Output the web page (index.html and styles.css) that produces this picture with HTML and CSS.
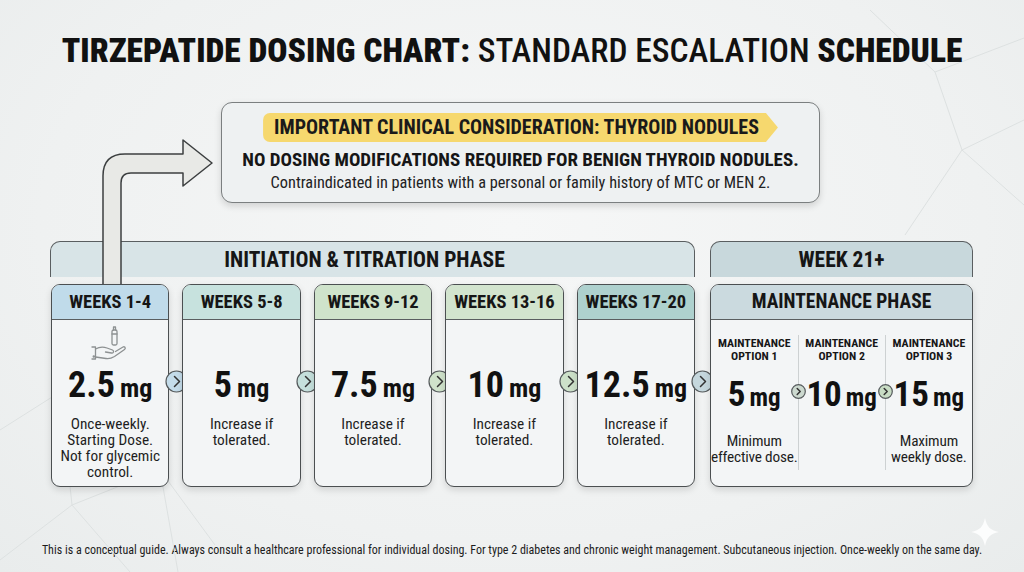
FILE: index.html
```html
<!DOCTYPE html>
<html lang="en">
<head>
<meta charset="utf-8">
<title>Tirzepatide Dosing Chart</title>
<link rel="stylesheet" href="styles.css">
</head>
<body>
<svg class="bg-lines" width="1024" height="572" viewBox="0 0 1024 572">
  <path d="M0 430 L60 392 L160 470 L178 572 M60 392 L72 505 L0 560 M72 505 L160 470 M72 505 L130 572 M160 470 L215 545" />
  <path d="M870 10 L935 72 L1024 38 M935 72 L962 150 L1024 205 M905 235 L962 150 M962 150 L1024 120" />
  <path class="sparkle" d="M985 518 C987 527 990 530 999 532 C990 534 987 537 985 546 C983 537 980 534 971 532 C980 530 983 527 985 518 Z" />
</svg>

<h1 class="title"><b>TIRZEPATIDE DOSING CHART:</b> <span class="light">STANDARD ESCALATION</span> <b>SCHEDULE</b></h1>

<section class="callout">
  <div class="banner">IMPORTANT CLINICAL CONSIDERATION: THYROID NODULES</div>
  <p class="callout-main">NO DOSING MODIFICATIONS REQUIRED FOR BENIGN THYROID NODULES.</p>
  <p class="callout-sub">Contraindicated in patients with a personal or family history of MTC or MEN 2.</p>
</section>

<svg class="bend-arrow" width="1024" height="572" viewBox="0 0 1024 572">
  <path d="M103 290 V176 Q103 154 125 154 H183 V140 L212 163 L183 186 V173 H131 Q121 173 121 183 V290" />
</svg>

<main class="phases">
  <section class="phase phase-init">
    <div class="phase-head">INITIATION &amp; TITRATION PHASE</div>
    <div class="cards">
      <article class="card c1">
        <div class="card-head">WEEKS 1-4</div>
        <div class="card-body">
          <div class="icon-slot">
            <svg class="hand-icon" width="40" height="40" viewBox="0 0 40 40">
              <rect x="22" y="6" width="5" height="15" rx="1.5" />
              <path d="M23.5 6 V3 H25.5 V6 M22 10 H27" />
              <path d="M2 23 H5.5 V35 H2" />
              <path d="M5.5 25 C9 23 13 22.5 17 24 L22.5 26 C24.5 27 23.5 29.5 21.5 29 L15.5 28" />
              <path d="M5.5 33 L16 34.5 C19 35 22 34 24.5 32.5 L34.5 25.5 C36 24.5 35 22 33 23 L25.5 27.5" />
              <circle cx="3.8" cy="32.5" r="0.6" />
            </svg>
          </div>
          <div class="dose">2.5<span>mg</span></div>
          <p class="desc">Once-weekly.<br>Starting Dose.<br>Not for glycemic<br>control.</p>
        </div>
        <span class="next n1"><svg width="23" height="23" viewBox="0 0 23 23"><circle cx="11.5" cy="11.5" r="10.5"/><path d="M9.5 6.5 L14.5 11.5 L9.5 16.5"/></svg></span>
      </article>
      <article class="card c2">
        <div class="card-head">WEEKS 5-8</div>
        <div class="card-body">
          <div class="icon-slot"></div>
          <div class="dose">5<span>mg</span></div>
          <p class="desc">Increase if<br>tolerated.</p>
        </div>
        <span class="next n2"><svg width="23" height="23" viewBox="0 0 23 23"><circle cx="11.5" cy="11.5" r="10.5"/><path d="M9.5 6.5 L14.5 11.5 L9.5 16.5"/></svg></span>
      </article>
      <article class="card c3">
        <div class="card-head">WEEKS 9-12</div>
        <div class="card-body">
          <div class="icon-slot"></div>
          <div class="dose">7.5<span>mg</span></div>
          <p class="desc">Increase if<br>tolerated.</p>
        </div>
        <span class="next n3"><svg width="23" height="23" viewBox="0 0 23 23"><circle cx="11.5" cy="11.5" r="10.5"/><path d="M9.5 6.5 L14.5 11.5 L9.5 16.5"/></svg></span>
      </article>
      <article class="card c4">
        <div class="card-head">WEEKS 13-16</div>
        <div class="card-body">
          <div class="icon-slot"></div>
          <div class="dose">10<span>mg</span></div>
          <p class="desc">Increase if<br>tolerated.</p>
        </div>
        <span class="next n4"><svg width="23" height="23" viewBox="0 0 23 23"><circle cx="11.5" cy="11.5" r="10.5"/><path d="M9.5 6.5 L14.5 11.5 L9.5 16.5"/></svg></span>
      </article>
      <article class="card c5">
        <div class="card-head">WEEKS 17-20</div>
        <div class="card-body">
          <div class="icon-slot"></div>
          <div class="dose">12.5<span>mg</span></div>
          <p class="desc">Increase if<br>tolerated.</p>
        </div>
        <span class="next n5"><svg width="23" height="23" viewBox="0 0 23 23"><circle cx="11.5" cy="11.5" r="10.5"/><path d="M9.5 6.5 L14.5 11.5 L9.5 16.5"/></svg></span>
      </article>
    </div>
  </section>

  <section class="phase phase-maint">
    <div class="phase-head">WEEK 21+</div>
    <article class="card maint">
      <div class="card-head">MAINTENANCE PHASE</div>
      <div class="options">
        <div class="opt">
          <div class="opt-label">MAINTENANCE<br>OPTION 1</div>
          <div class="dose">5<span>mg</span></div>
          <p class="desc">Minimum<br>effective dose.</p>
        </div>
        <div class="opt">
          <span class="mini m1"><svg width="15" height="15" viewBox="0 0 15 15"><circle cx="7.5" cy="7.5" r="6.8"/><path d="M6.2 4.5 L9.2 7.5 L6.2 10.5"/></svg></span>
          <div class="opt-label">MAINTENANCE<br>OPTION 2</div>
          <div class="dose">10<span>mg</span></div>
        </div>
        <div class="opt">
          <span class="mini m2"><svg width="15" height="15" viewBox="0 0 15 15"><circle cx="7.5" cy="7.5" r="6.8"/><path d="M6.2 4.5 L9.2 7.5 L6.2 10.5"/></svg></span>
          <div class="opt-label">MAINTENANCE<br>OPTION 3</div>
          <div class="dose">15<span>mg</span></div>
          <p class="desc">Maximum<br>weekly dose.</p>
        </div>
      </div>
    </article>
  </section>
</main>

<footer class="footnote">This is a conceptual guide. Always consult a healthcare professional for individual dosing. For type 2 diabetes and chronic weight management. Subcutaneous injection. Once-weekly on the same day.</footer>
</body>
</html>
```

FILE: styles.css
```css
* { box-sizing: border-box; }

body {
  margin: 0;
  width: 1024px;
  height: 572px;
  overflow: hidden;
  position: relative;
  background: radial-gradient(ellipse at 50% 40%, #f6f7f7 0%, #eff1f1 65%, #e9ecec 100%);
  font-family: "Roboto Condensed", "Liberation Sans Narrow", "DejaVu Sans Condensed", sans-serif;
  color: #161616;
}

.bg-lines {
  position: absolute;
  left: 0;
  top: 0;
  z-index: 0;
  fill: none;
  stroke: #dde1e1;
  stroke-width: 1;
}
.bg-lines .sparkle { fill: #ffffff; stroke: none; opacity: 0.85; }

.title {
  position: relative;
  z-index: 1;
  margin: 0;
  padding-top: 33px;
  text-align: center;
  font-size: 33.5px;
  line-height: 36px;
  font-weight: 700;
  color: #111;
}
.title .light { font-weight: 500; }

.callout {
  position: relative;
  z-index: 2;
  margin: 33px 0 0 221px;
  width: 599px;
  height: 101px;
  border: 1.5px solid #7b7f80;
  border-radius: 11px;
  background: #eef1f2;
  box-shadow: 0 3px 7px rgba(0, 0, 0, 0.14);
  padding-top: 10px;
  text-align: center;
}
.banner {
  display: inline-block;
  height: 29px;
  line-height: 29px;
  padding: 0 19px 0 11px;
  background: #f6d86e;
  border-radius: 7px 0 0 7px;
  clip-path: polygon(0 0, calc(100% - 12px) 0, 100% 50%, calc(100% - 12px) 100%, 0 100%);
  font-size: 20px;
  font-weight: 700;
  color: #1a1a1a;
}
.callout-main {
  margin: 8px 0 0;
  font-size: 19px;
  line-height: 20px;
  font-weight: 700;
}
.callout-sub {
  margin: 4px 0 0;
  font-size: 16.3px;
  line-height: 18px;
  color: #222;
}

.bend-arrow {
  position: absolute;
  left: 0;
  top: 0;
  z-index: 1;
  pointer-events: none;
  fill: #e8e9e6;
  stroke: #3c3f40;
  stroke-width: 1.5;
  stroke-linejoin: round;
}

.phases {
  display: flex;
  gap: 15px;
  margin: 38px 0 0 50px;
}
.phase-init { width: 645px; }
.phase-maint { width: 263px; }

.phase-head {
  height: 36px;
  border: 1.5px solid #5a5e60;
  border-bottom: none;
  border-radius: 10px 10px 0 0;
  background: #d8e4e7;
  text-align: center;
  font-size: 21.5px;
  font-weight: 700;
  line-height: 36px;
}
.phase-init .phase-head { padding-right: 16px; }
.phase-maint .phase-head { background: #c8d8dc; }

.cards {
  display: flex;
  gap: 13px;
  margin-top: 7px;
  padding-left: 1px;
}

.card {
  flex: 1;
  height: 203px;
  border: 1.5px solid #4b4f51;
  border-radius: 9px;
  background: #f3f5f6;
  position: relative;
  z-index: 2;
  box-shadow: 0 3px 7px rgba(0, 0, 0, 0.13);
  display: flex;
  flex-direction: column;
}
.card-head {
  height: 35px;
  border-bottom: 1.5px solid #5a5e60;
  border-radius: 8px 8px 0 0;
  text-align: center;
  font-size: 18.5px;
  font-weight: 700;
  line-height: 34px;
}
.c1 .card-head { background: #c0dbea; }
.c2 .card-head { background: #c7e2de; }
.c3 .card-head { background: #cfe3cb; }
.c4 .card-head { background: #d2e4ce; }
.c5 .card-head { background: #aed1ce; }

.card-body { text-align: center; }
.icon-slot {
  height: 45px;
  display: flex;
  justify-content: center;
  padding-top: 4px;
}
.hand-icon {
  fill: none;
  stroke: #8d9192;
  stroke-width: 1.3;
  stroke-linecap: round;
  stroke-linejoin: round;
}

.dose {
  font-size: 36px;
  font-weight: 700;
  line-height: 40px;
  color: #111;
  white-space: nowrap;
}
.dose span {
  font-size: 26px;
  margin-left: 5px;
}
.desc {
  margin: 8px 0 0;
  font-size: 15.3px;
  line-height: 16px;
  color: #1e1e1e;
  white-space: nowrap;
}

.next {
  position: absolute;
  right: -19.5px;
  top: 85px;
  width: 23px;
  height: 23px;
  z-index: 3;
}
.next svg, .mini svg { display: block; }
.next circle, .mini circle { stroke: #555a5c; stroke-width: 1.2; }
.next path, .mini path { fill: none; stroke: #333; stroke-width: 1.5; stroke-linecap: round; stroke-linejoin: round; }
.n1 circle { fill: #c4dcea; }
.n2 circle { fill: #c5e0dc; }
.n3 circle { fill: #cfe2ca; }
.n4 circle { fill: #cde1c9; }
.n5 circle { fill: #c5d7dd; }

.maint {
  flex: none;
  margin-top: 7px;
}
.maint .card-head {
  background: #cbdadf;
  font-size: 19.5px;
  line-height: 34px;
}
.options {
  display: flex;
  margin-top: 15px;
  height: 135px;
}
.opt {
  flex: 1;
  position: relative;
  text-align: center;
  padding-top: 2px;
}
.opt + .opt { border-left: 1.5px solid #cdd1d2; }
.opt-label {
  font-size: 11.8px;
  font-weight: 700;
  line-height: 13px;
}
.opt .dose {
  margin-top: 12px;
  font-size: 35px;
  line-height: 39px;
}
.opt .dose span {
  font-size: 25px;
  margin-left: 4px;
}
.opt .desc { margin-top: 16px; letter-spacing: -0.2px; }

.mini {
  position: absolute;
  left: -8px;
  top: 49px;
  width: 15px;
  height: 15px;
}
.m1 circle { fill: #ccd9cf; }
.m2 circle { fill: #c8dcc4; }

.footnote {
  margin-top: 55px;
  text-align: center;
  font-size: 12px;
  line-height: 16px;
  color: #1c1c1c;
  white-space: nowrap;
}
```
